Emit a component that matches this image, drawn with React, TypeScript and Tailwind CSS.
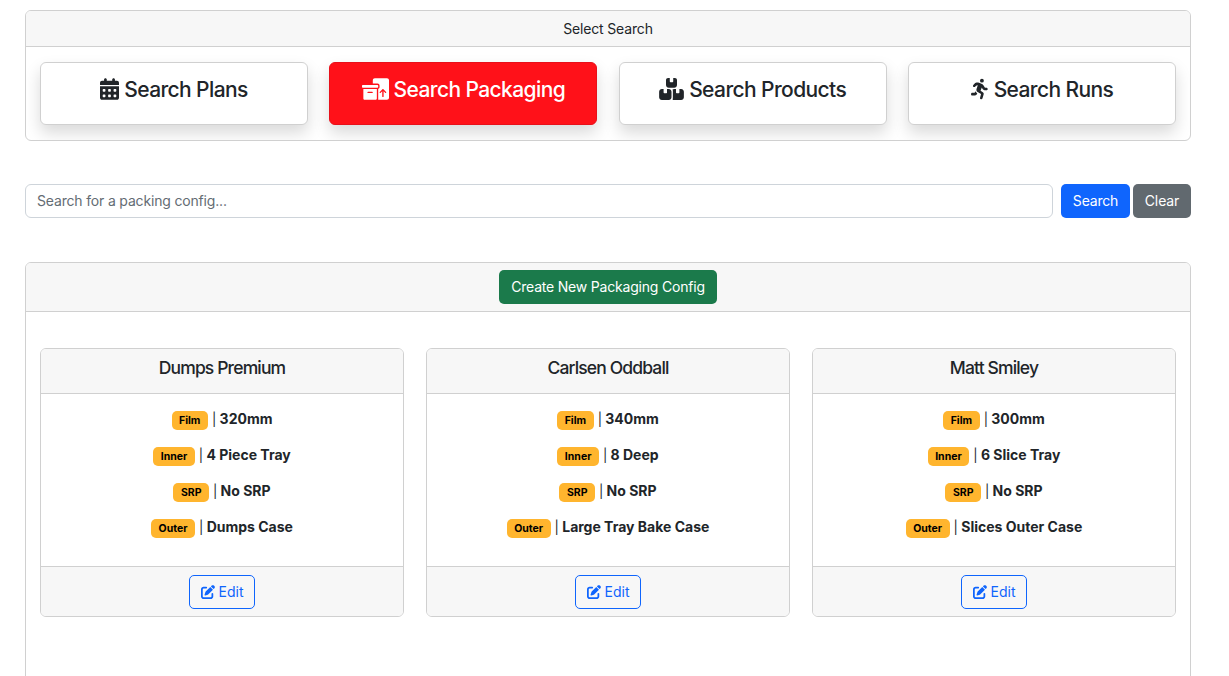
import { FaCalendarDays, FaBoxesPacking, FaBoxesStacked, FaPersonRunning, FaPenToSquare } from "react-icons/fa6";

const tabs = [
  { label: "Search Plans", Icon: FaCalendarDays, active: false, size: "w-[19px]" },
  { label: "Search Packaging", Icon: FaBoxesPacking, active: true, size: "w-[27px]" },
  { label: "Search Products", Icon: FaBoxesStacked, active: false, size: "w-[25px]" },
  { label: "Search Runs", Icon: FaPersonRunning, active: false, size: "w-[18px]" },
];

const configs = [
  { name: "Dumps Premium", film: "320mm", inner: "4 Piece Tray", srp: "No SRP", outer: "Dumps Case" },
  { name: "Carlsen Oddball", film: "340mm", inner: "8 Deep", srp: "No SRP", outer: "Large Tray Bake Case" },
  { name: "Matt Smiley", film: "300mm", inner: "6 Slice Tray", srp: "No SRP", outer: "Slices Outer Case" },
];

function Row({ tag, value }: { tag: string; value: string }) {
  return (
    <p className="h-[36px] text-[14px] leading-[21px] font-bold text-[#212529] text-center">
      <span className="inline-block align-[0px] bg-[#ffb52e] text-black text-[10.5px] leading-[11px] font-bold rounded-[5px] px-[7.5px] py-[4px] mr-[4px] h-[19px]">{tag}</span>
      <span className="font-normal text-[13px]">|</span> {value}
    </p>
  );
}

export default function App() {
  return (
    <div className="h-[676px] overflow-hidden bg-white text-[#212529] pl-[25px] pt-[10px] [font-family:Inter,'Liberation_Sans',sans-serif]">
      <div className="w-[1166px]">
        <section className="h-[131px] border border-[#d0d0d0] rounded-[6px] overflow-hidden">
          <div className="h-[36px] pb-[1px] border-b border-[#d0d0d0] bg-[#f7f7f7] text-[14px] tracking-[-0.15px] flex items-center justify-center">Select Search</div>
          <div className="grid grid-cols-4 gap-[21.33px] px-[14px] pt-[15px]">
            {tabs.map(({ label, Icon, active, size }) => (
              <button
                key={label}
                className={`h-[63px] rounded-[6px] border shadow-[0_8px_16px_rgba(0,0,0,0.15)] flex items-start justify-center pt-[12px] text-[21px] leading-[30px] font-medium tracking-[-0.6px] gap-[5px] ${active ? "bg-[#ff1119] border-[#e8101a] text-white" : "bg-white border-[#d0d0d0] text-[#212529]"}`}
              >
                <Icon className={`h-[22px] ${size} mt-[3px] shrink-0`} />
                <span>{label}</span>
              </button>
            ))}
          </div>
        </section>

        <div className="flex mt-[43px] h-[34px]">
          <input
            readOnly
            placeholder="Search for a packing config..."
            className="flex-1 h-[34px] pb-[1px] border border-[#ced4da] rounded-[6px] px-[11px] text-[14px] tracking-[-0.17px] text-[#212529] placeholder:text-[#646c73] outline-none"
          />
          <button className="ml-[8px] w-[69px] h-[34px] pb-[1px] rounded-[5px] bg-[#0f65fd] text-white text-[14px] tracking-[-0.2px]">Search</button>
          <button className="ml-[3px] w-[58px] h-[34px] pb-[1px] rounded-[5px] bg-[#61696f] text-white text-[14px] tracking-[-0.1px]">Clear</button>
        </div>

        <section className="mt-[44px] h-[500px] border border-[#d0d0d0] rounded-[6px] overflow-hidden">
          <div className="h-[49px] border-b border-[#d0d0d0] bg-[#f7f7f7] flex items-center justify-center">
            <button className="w-[218px] h-[34px] pb-[1px] rounded-[5px] bg-[#1b7a4b] text-white text-[14px] tracking-[-0.2px]">Create New Packaging Config</button>
          </div>
          <div className="grid grid-cols-3 gap-[22px] px-[14px] pt-[36px]">
            {configs.map((c) => (
              <article key={c.name} className="h-[269px] border border-[#d0d0d0] rounded-[6px] overflow-hidden flex flex-col">
                <h3 className="h-[45px] pb-[6px] shrink-0 border-b border-[#d0d0d0] bg-[#f7f7f7] flex items-center justify-center text-[17.5px] font-medium tracking-[-0.85px] text-[#212529]">{c.name}</h3>
                <div className="flex-1 pt-[14px]">
                  <Row tag="Film" value={c.film} />
                  <Row tag="Inner" value={c.inner} />
                  <Row tag="SRP" value={c.srp} />
                  <Row tag="Outer" value={c.outer} />
                </div>
                <div className="h-[50px] shrink-0 border-t border-[#d0d0d0] bg-[#f7f7f7] flex items-center justify-center">
                  <button className="w-[66.6px] h-[34px] rounded-[5px] border border-[#0f65fd] text-[#0f65fd] text-[14px] flex items-center justify-center gap-[4px]">
                    <FaPenToSquare className="w-[14px] h-[14px]" />
                    <span>Edit</span>
                  </button>
                </div>
              </article>
            ))}
          </div>
        </section>
      </div>
    </div>
  );
}
